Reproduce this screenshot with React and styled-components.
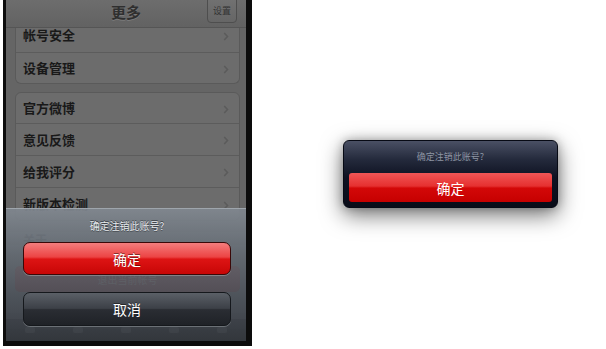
import React from 'react';
import styled, { createGlobalStyle } from 'styled-components';

const GlobalStyle = createGlobalStyle`
  html, body {
    margin: 0;
    padding: 0;
    background: #ffffff;
  }
  body {
    font-family: "Noto Sans CJK SC", "Liberation Sans", sans-serif;
  }
`;

const Page = styled.div`
  display: flex;
  align-items: flex-start;
  width: 606px;
  height: 349px;
  padding-left: 3px;
  box-sizing: border-box;
`;

const Phone = styled.div`
  width: 249px;
  height: 346px;
  background: #0c0c0c;
  padding: 0 6px 5px 3px;
  box-sizing: border-box;
  flex-shrink: 0;
`;

const Screen = styled.div`
  position: relative;
  width: 240px;
  height: 341px;
  overflow: hidden;
  background: #656565;
  display: flex;
  flex-direction: column;
`;

const NavBar = styled.div`
  position: relative;
  z-index: 1;
  height: 27px;
  flex-shrink: 0;
  background: linear-gradient(#6d6d6d, #626262);
  border-bottom: 1px solid #555;
  display: flex;
  align-items: center;
  justify-content: center;
`;

const NavTitle = styled.div`
  font-size: 15px;
  font-weight: 700;
  color: #2f2f2f;
  text-shadow: 0 1px 0 #7a7a7a;
  margin-top: -4px;
`;

const NavButton = styled.div`
  position: absolute;
  right: 9px;
  top: -4px;
  width: 30px;
  height: 27px;
  border: 1px solid #4e4e4e;
  border-radius: 4px;
  background: linear-gradient(#727272, #666);
  box-sizing: border-box;
  display: flex;
  align-items: flex-end;
  justify-content: center;
  padding-bottom: 5px;
  font-size: 9px;
  color: #333;
`;

const List = styled.div`
  display: flex;
  flex-direction: column;
  gap: 8px;
  padding: 0 6px 0 9px;
`;

const Group = styled.div`
  border: 1px solid #5a5a5a;
  border-radius: ${p => (p.$cut ? '0 0 6px 6px' : '6px')};
  border-top-width: ${p => (p.$cut ? 0 : 1)}px;
  background: #6c6c6c;
  overflow: hidden;
  margin-top: ${p => (p.$cut ? '-10px' : '0')};
`;

const Row = styled.div`
  height: ${p => p.$h}px;
  box-sizing: border-box;
  display: flex;
  align-items: center;
  justify-content: space-between;
  padding: 0 10px 1px 7px;
  border-top: 1px solid #5c5c5c;
  font-size: 13px;
  font-weight: 700;
  color: #191919;

  &:first-child {
    border-top: none;
  }
`;

const Chevron = () => (
  <svg width="6" height="9" viewBox="0 0 6 9" style={{ marginTop: 3 }}>
    <polyline points="1.2,1 4.5,4.5 1.2,8" fill="none" stroke="#5b5b5b" strokeWidth="1.6" />
  </svg>
);

const Plain = styled.div`
  padding: 10px 0 0 17px;
  font-size: 12px;
  font-weight: 700;
  color: #222;
`;

const LogoutBar = styled.div`
  margin: 18px 6px 0 9px;
  height: 26px;
  border-radius: 5px;
  background: #8a2424;
  display: flex;
  align-items: center;
  justify-content: center;
  font-size: 10px;
  color: #b98;
`;

const TabBar = styled.div`
  margin-top: auto;
  height: 22px;
  display: flex;
  justify-content: space-around;
  align-items: center;
  background: #2a2a2a;
`;

const TabDot = styled.div`
  width: 10px;
  height: 6px;
  border-radius: 2px;
  background: #777;
`;

const Sheet = styled.div`
  position: absolute;
  z-index: 2;
  left: 0;
  right: 0;
  top: 208px;
  bottom: 0;
  padding: 0 15px 0 17px;
  border-top: 1px solid rgba(170, 176, 184, 0.9);
  background: linear-gradient(
    rgba(128, 135, 143, 0.93) 0%,
    rgba(98, 105, 113, 0.9) 35%,
    rgba(72, 78, 86, 0.9) 70%,
    rgba(52, 56, 62, 0.92) 100%
  );
  display: flex;
  flex-direction: column;
`;

const SheetTitle = styled.div`
  height: 33px;
  line-height: 33px;
  text-align: center;
  font-size: 10px;
  color: #e6e9ec;
  text-shadow: 0 -1px 0 #3e4349, 0 1px 0 #4a4f55;
`;

const SheetButton = styled.div`
  height: ${p => p.$h}px;
  margin-bottom: ${p => p.$gap || 0}px;
  border-radius: 7px;
  border: 1px solid ${p => (p.$danger ? '#3a0808' : '#15181c')};
  box-sizing: border-box;
  display: flex;
  align-items: center;
  justify-content: center;
  font-size: 14px;
  color: #fff;
  text-shadow: 0 -1px 0 rgba(0, 0, 0, 0.45);
  box-shadow: 0 1px 0 rgba(200, 205, 210, 0.35);
  background: ${p =>
    p.$danger
      ? 'linear-gradient(#f47d7d 0%, #ec4444 45%, #dd1414 52%, #c80606 100%)'
      : 'linear-gradient(#5b6067 0%, #3c4047 48%, #2a2d33 52%, #1f2227 100%)'};
`;

const Side = styled.div`
  flex: 1;
  padding: 140px 0 0 91px;
`;

const Dialog = styled.div`
  width: 215px;
  height: 68px;
  box-sizing: border-box;
  border-radius: 6px;
  border: 1px solid #070a14;
  background: linear-gradient(#4a5064 0%, #242a3c 28%, #0e1222 55%, #090c18 100%);
  box-shadow: 0 7px 22px rgba(0, 0, 0, 0.55), 0 0 10px rgba(0, 0, 0, 0.25);
  padding: 0 5px 5px;
  display: flex;
  flex-direction: column;
`;

const DialogTitle = styled.div`
  height: 32px;
  line-height: 32px;
  text-align: center;
  font-size: 9px;
  color: #8e95a3;
`;

const DialogButton = styled.div`
  flex: 1;
  border-radius: 3px;
  display: flex;
  align-items: center;
  justify-content: center;
  font-size: 14px;
  color: #fff;
  background: linear-gradient(#f05656 0%, #e63030 45%, #d30808 52%, #c60000 100%);
`;

const rowsA = [
  { label: '帐号安全', h: 34 },
  { label: '设备管理', h: 31 },
];

const rowsB = [
  { label: '官方微博', h: 30 },
  { label: '意见反馈', h: 32 },
  { label: '给我评分', h: 32 },
  { label: '新版本检测', h: 33 },
];

export default function App() {
  return (
    <>
      <GlobalStyle />
      <Page>
        <Phone>
          <Screen>
            <NavBar>
              <NavTitle>更多</NavTitle>
              <NavButton>设置</NavButton>
            </NavBar>
            <List>
              <Group $cut>
                {rowsA.map(r => (
                  <Row key={r.label} $h={r.h}>
                    {r.label}
                    <Chevron />
                  </Row>
                ))}
              </Group>
              <Group>
                {rowsB.map(r => (
                  <Row key={r.label} $h={r.h}>
                    {r.label}
                    <Chevron />
                  </Row>
                ))}
              </Group>
            </List>
            <Plain>关于</Plain>
            <LogoutBar>退出当前帐号</LogoutBar>
            <TabBar>
              {[0, 1, 2, 3, 4].map(i => (
                <TabDot key={i} />
              ))}
            </TabBar>
            <Sheet>
              <SheetTitle>确定注销此账号?</SheetTitle>
              <SheetButton $danger $h={33} $gap={17}>确定</SheetButton>
              <SheetButton $h={34}>取消</SheetButton>
            </Sheet>
          </Screen>
        </Phone>
        <Side>
          <Dialog>
            <DialogTitle>确定注销此账号?</DialogTitle>
            <DialogButton>确定</DialogButton>
          </Dialog>
        </Side>
      </Page>
    </>
  );
}
